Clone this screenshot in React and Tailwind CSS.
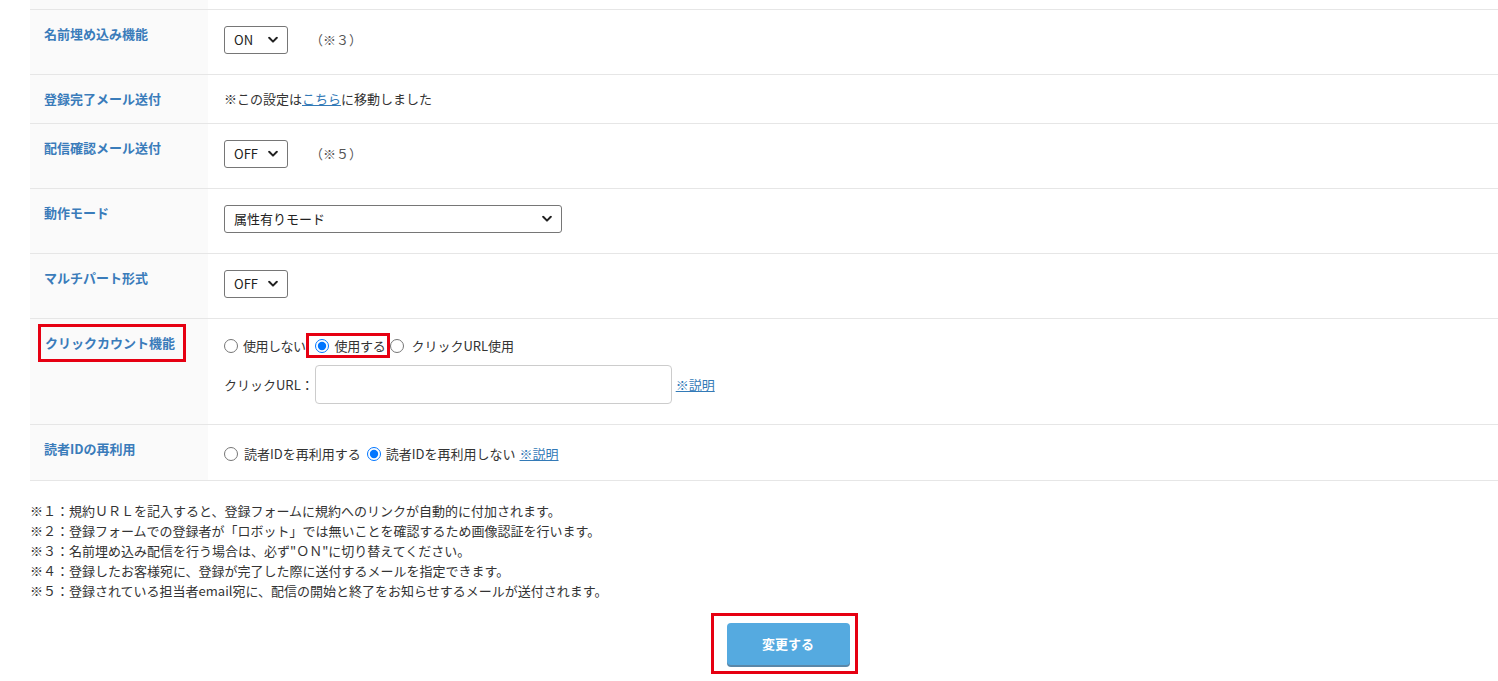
import React from "react";

const font = { fontFamily: '"Noto Sans CJK JP", "Noto Sans", sans-serif' };

const Chevron = () => (
  <svg className="pointer-events-none absolute right-[10px] top-1/2 -translate-y-1/2" width="10" height="7" viewBox="0 0 10 7">
    <path d="M1.2 1.3 L5 5.1 L8.8 1.3" fill="none" stroke="#222" strokeWidth="2" strokeLinecap="round" strokeLinejoin="round" />
  </svg>
);

const Select = ({ value, width }) => (
  <div className={`relative inline-block ${width}`}>
    <select
      defaultValue={value}
      className="h-[28px] w-full appearance-none rounded-[3px] border border-[#767676] bg-white pl-[9px] pr-6 text-[13px] text-[#222] outline-none"
    >
      <option>{value}</option>
    </select>
    <Chevron />
  </div>
);

const Row = ({ label, children, labelClass = "pt-[14px] pb-[14px]", valueClass = "pt-4 pb-[20px]" }) => (
  <div className="flex border-b border-[#e6e6e6]">
    <div className={`w-[178px] shrink-0 bg-[#fafafa] pl-[14px] text-[13px] leading-5 ${labelClass}`}>
      {typeof label === "string" ? <span className="font-bold text-[#3a7cba]">{label}</span> : label}
    </div>
    <div className={`flex-1 pl-4 text-[13px] leading-5 text-[#333] ${valueClass}`}>{children}</div>
  </div>
);

const Radio = ({ checked, name }) => (
  <input type="radio" name={name} defaultChecked={checked} className="m-0 h-[14px] w-[14px] shrink-0 accent-[#0075ff]" />
);

export default function App() {
  return (
    <div className="min-h-[681px] w-[1498px] bg-white" style={font}>
      <div className="ml-[30px] border-b border-[#e6e6e6]">
        <div className="h-[9px] w-[178px] bg-[#fafafa]" />
      </div>
      <div className="ml-[30px]">
        <Row label="名前埋め込み機能">
          <div className="flex items-center">
            <Select value="ON" width="w-[64px]" />
            <span className="ml-[22px] text-[#555]">（※３）</span>
          </div>
        </Row>
        <Row label="登録完了メール送付" valueClass="pt-[14px] pb-[14px]">
          <p>
            ※この設定は<a href="#" className="text-[#337ab7] underline">こちら</a>に移動しました
          </p>
        </Row>
        <Row label="配信確認メール送付">
          <div className="flex items-center">
            <Select value="OFF" width="w-[64px]" />
            <span className="ml-[22px] text-[#555]">（※５）</span>
          </div>
        </Row>
        <Row label="動作モード">
          <Select value="属性有りモード" width="w-[338px]" />
        </Row>
        <Row label="マルチパート形式">
          <Select value="OFF" width="w-[64px]" />
        </Row>
        <Row
          labelClass="pt-[5px] pb-4"
          label={
            <span className="-ml-[6px] inline-block border-[3px] border-[#e60012] py-[6px] pl-[4px] pr-[8px] font-bold text-[#3a7cba]">
              クリックカウント機能
            </span>
          }
          valueClass="pt-[14px] pb-[20px]"
        >
          <div className="flex h-[25px] items-center">
            <Radio name="click" />
            <span className="ml-[5px] tracking-[-0.04em]">使用しない</span>
            <span className="ml-[1px] flex h-[25px] items-center border-[3px] border-[#e60012] pl-[6px] pr-[2px]">
              <Radio name="click" checked />
              <span className="ml-[5px] tracking-[-0.02em]">使用する</span>
            </span>
            <Radio name="click" />
            <span className="ml-[7px]">クリックURL使用</span>
          </div>
          <div className="mt-[7px] flex items-center">
            <span>クリックURL：</span>
            <input type="text" className="ml-[1px] h-[39px] w-[357px] rounded-[4px] border border-[#cccccc] bg-white outline-none" />
            <a href="#" className="ml-[4px] text-[#337ab7] underline">※説明</a>
          </div>
        </Row>
        <Row label="読者IDの再利用" valueClass="pt-[18px] pb-[15px]">
          <div className="flex h-[22px] items-center">
            <Radio name="reuse" />
            <span className="ml-[6px]">読者IDを再利用する</span>
            <span className="ml-[6px] flex items-center">
              <Radio name="reuse" checked />
              <span className="ml-[5px]">読者IDを再利用しない</span>
            </span>
            <a href="#" className="ml-[4px] text-[#337ab7] underline">※説明</a>
          </div>
        </Row>
      </div>

      <div className="ml-[30px] mt-[20px] text-[13px] leading-5 text-[#333]">
        <p>※１：規約ＵＲＬを記入すると、登録フォームに規約へのリンクが自動的に付加されます。</p>
        <p>※２：登録フォームでの登録者が「ロボット」では無いことを確認するため画像認証を行います。</p>
        <p>※３：名前埋め込み配信を行う場合は、必ず"ＯＮ"に切り替えてください。</p>
        <p>※４：登録したお客様宛に、登録が完了した際に送付するメールを指定できます。</p>
        <p>※５：登録されている担当者email宛に、配信の開始と終了をお知らせするメールが送付されます。</p>
      </div>

      <div className="mt-[12px] flex justify-center pl-[70px]">
        <div className="border-[3px] border-[#e60012] pb-[6px] pl-[13px] pr-[5px] pt-[7px]">
          <button className="block h-[42px] w-[123px] rounded-[4px] bg-[#55aae0] text-[13px] font-bold text-white shadow-[0_2px_0_#5a87a8]">
            変更する
          </button>
        </div>
      </div>
    </div>
  );
}
